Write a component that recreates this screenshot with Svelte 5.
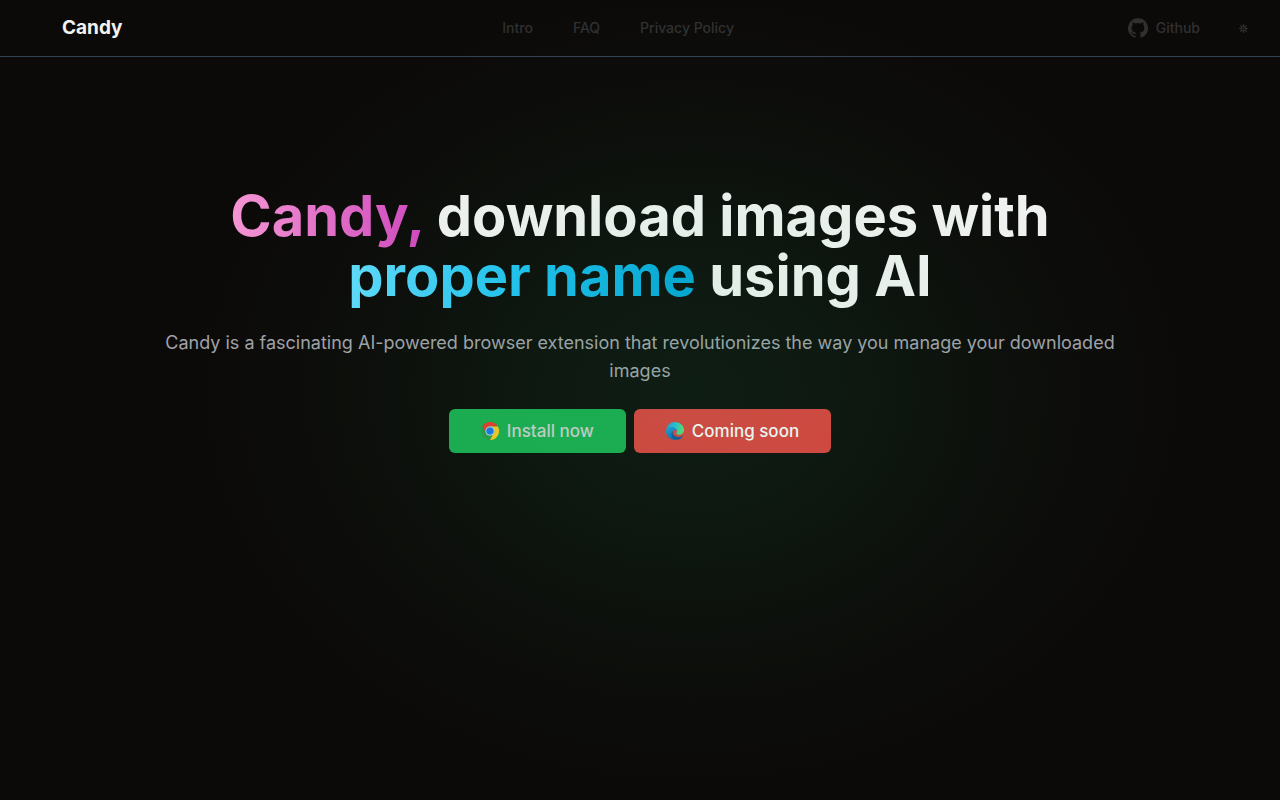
<script lang="ts">
	interface NavLink {
		label: string;
		href: string;
	}

	const links: NavLink[] = [
		{ label: 'Intro', href: '#intro' },
		{ label: 'FAQ', href: '#faq' },
		{ label: 'Privacy Policy', href: '#privacy' }
	];

	let dark = $state(true);
</script>

<div class="page" class:light={!dark}>
	<header class="navbar">
		<a class="brand" href="#home">Candy</a>

		<nav class="links" aria-label="Main">
			{#each links as link (link.href)}
				<a href={link.href}>{link.label}</a>
			{/each}
		</nav>

		<div class="actions">
			<a class="github" href="#github">
				<svg width="20" height="20" viewBox="0 0 24 24" fill="currentColor" aria-hidden="true">
					<path
						d="M12 .3a12 12 0 0 0-3.8 23.4c.6.1.8-.3.8-.6v-2.2c-3.3.7-4-1.4-4-1.4-.6-1.4-1.4-1.8-1.4-1.8-1-.7.1-.7.1-.7 1.2 0 1.9 1.2 1.9 1.2 1 1.8 2.8 1.3 3.5 1 0-.8.4-1.3.7-1.6-2.7-.3-5.5-1.3-5.5-6 0-1.2.5-2.3 1.3-3.1-.2-.4-.6-1.6 0-3.2 0 0 1-.3 3.4 1.2a11.5 11.5 0 0 1 6 0c2.3-1.5 3.3-1.2 3.3-1.2.6 1.6.2 2.8 0 3.2.9.8 1.3 1.9 1.3 3.2 0 4.6-2.8 5.6-5.5 5.9.5.4.9 1 .9 2.2v3.3c0 .3.1.7.8.6A12 12 0 0 0 12 .3"
					/>
				</svg>
				Github
			</a>
			<button class="theme" type="button" aria-label="Toggle theme" onclick={() => (dark = !dark)}>
				<svg
					width="9"
					height="9"
					viewBox="0 0 24 24"
					fill="none"
					stroke="currentColor"
					stroke-width="3"
					stroke-linecap="round"
					aria-hidden="true"
				>
					<circle cx="12" cy="12" r="6" />
					<path
						d="M12 1v4M12 19v4M4.2 4.2l2.4 2.4M17.4 17.4l2.4 2.4M1 12h4M19 12h4M4.2 19.8l2.4-2.4M17.4 6.6l2.4-2.4"
					/>
					<circle cx="12" cy="12" r="1" />
				</svg>
			</button>
		</div>
	</header>

	<main class="hero">
		<h1>
			<span class="pink">Candy,</span> download images with
			<span class="blue">proper name</span> using AI
		</h1>
		<p>
			Candy is a fascinating AI-powered browser extension that revolutionizes the way you manage your
			downloaded images
		</p>

		<div class="buttons">
			<button class="btn install" type="button">
				<svg width="18" height="18" viewBox="0 0 48 48" aria-hidden="true">
					<circle cx="24" cy="24" r="24" fill="#2a9a48" />
					<path d="M3.2 12A24 24 0 0 1 44.8 12H24a12 12 0 0 0-10.4 18z" fill="#e33b2e" />
					<path d="M3.2 12A24 24 0 0 0 24 48l10.4-18A12 12 0 0 1 13.6 30z" fill="#2a9a48" />
					<path d="M44.8 12A24 24 0 0 1 24 48l10.4-18A12 12 0 0 0 24 12z" fill="#fcc521" />
					<circle cx="24" cy="24" r="12" fill="#e8eef4" />
					<circle cx="24" cy="24" r="10" fill="#1a73e8" />
				</svg>
				Install now
			</button>
			<button class="btn soon" type="button">
				<svg width="18" height="18" viewBox="0 0 48 48" aria-hidden="true">
					<defs>
						<linearGradient id="edge-top" x1="0" y1="0.4" x2="1" y2="0.6">
							<stop offset="0" stop-color="#229ed8" />
							<stop offset="0.5" stop-color="#2bc3d2" />
							<stop offset="1" stop-color="#62df59" />
						</linearGradient>
						<linearGradient id="edge-left" x1="0.3" y1="0" x2="0.6" y2="1">
							<stop offset="0" stop-color="#1b9de2" />
							<stop offset="1" stop-color="#0b65b0" />
						</linearGradient>
					</defs>
					<path
						d="M1 21C2 9 12 0 24 0c14 0 24 10 24 21 0 8-6 13-13 13-5 0-8-2-8-4 0-1 2-2 2-6 0-5-6-10-13-10C9 14 4 17 1 21z"
						fill="url(#edge-top)"
					/>
					<path
						d="M0 24C1 17 8 13 15 13c8 0 14 5 14 11-1-2-3-3-5-3-5 0-8 5-8 10 0 8 6 15 13 16-15 3-29-8-29-23z"
						fill="url(#edge-left)"
					/>
					<path
						d="M18 24c-1 5 0 9 4 12 6 5 15 5 22 1 1-1 2 0 1 1-5 8-14 11-21 9-9-3-13-15-6-23z"
						fill="#10539c"
					/>
				</svg>
				Coming soon
			</button>
		</div>
	</main>

	<div class="glow"></div>
</div>

<style>
	:global(body) {
		margin: 0;
		background: #0c0a09;
	}

	.page {
		position: relative;
		display: flex;
		flex-direction: column;
		min-height: 100vh;
		overflow: hidden;
		background: #0c0a09;
		color: #f2f2f2;
		font-family: Inter, 'Liberation Sans', sans-serif;
	}

	.page.light {
		background: #1c1917;
	}

	a {
		color: inherit;
		text-decoration: none;
	}

	button {
		border: none;
		font: inherit;
		cursor: pointer;
	}

	.navbar {
		display: flex;
		align-items: center;
		justify-content: space-between;
		height: 56px;
		padding: 0 32px 0 62px;
		border-bottom: 1px solid #334155;
		color: #303030;
		font-size: 14px;
		font-weight: 500;
		line-height: 20px;
	}

	.brand {
		color: #f2f2f2;
		font-size: 19px;
		font-weight: 700;
		line-height: 28px;
	}

	.links {
		display: flex;
		gap: 40px;
		margin-right: 14px;
	}

	.actions {
		display: flex;
		align-items: center;
		gap: 39px;
	}

	.github {
		display: flex;
		align-items: center;
		gap: 8px;
	}

	.theme {
		display: flex;
		padding: 0;
		background: transparent;
		color: inherit;
	}

	.hero {
		display: flex;
		flex-direction: column;
		align-items: center;
		padding: 129px 32px 0;
		text-align: center;
	}

	h1 {
		max-width: 976px;
		margin: 0;
		font-size: 56px;
		font-weight: 700;
		line-height: 60px;
	}

	.pink,
	.blue {
		background-clip: text;
		-webkit-background-clip: text;
		color: transparent;
	}

	.pink {
		background-image: linear-gradient(to right, #f596d3, #d247bf);
	}

	.blue {
		background-image: linear-gradient(to right, #61dafb, #1fc0f1, #03a3d7);
	}

	p {
		max-width: 976px;
		margin: 23px 0 24px;
		color: #a1a1aa;
		font-size: 18px;
		line-height: 28px;
	}

	.buttons {
		display: flex;
		flex-wrap: wrap;
		justify-content: center;
		gap: 8px;
	}

	.btn {
		display: flex;
		align-items: center;
		gap: 8px;
		height: 44px;
		padding: 0 32px;
		border-radius: 6px;
		font-size: 17px;
		font-weight: 500;
	}

	.install {
		background: #1baa4f;
		color: #ccc;
	}

	.soon {
		background: #dc3f3d;
		color: #fafafa;
	}

	/* Soft green light over the whole page */
	.glow {
		position: absolute;
		inset: 0;
		background: radial-gradient(
			ellipse 500px 400px at 54% 49%,
			rgba(34, 197, 110, 0.1),
			rgba(34, 197, 110, 0.08) 30%,
			rgba(34, 197, 94, 0.03) 62%,
			transparent
		);
		pointer-events: none;
	}
</style>
